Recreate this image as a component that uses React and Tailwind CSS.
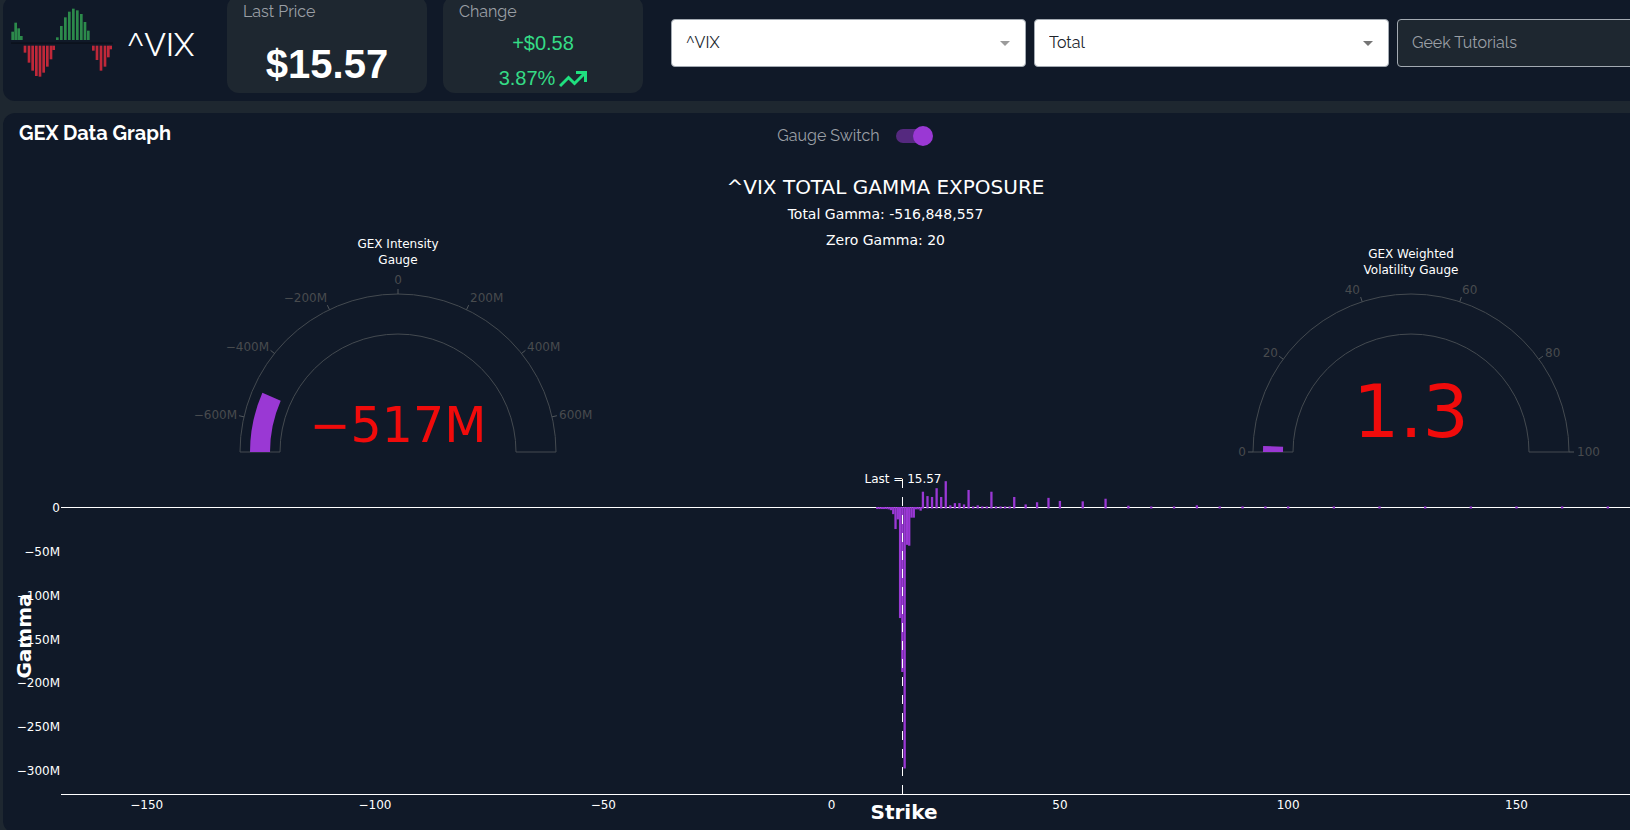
import React from "react";

const GREEN_BARS = [
  [38, 95], [47, 68], [56, 85], [64, 108],
  [172, 112], [184, 78], [196, 52], [208, 35], [220, 26], [232, 31], [244, 42], [255, 66], [265, 92],
];
const RED_BARS = [
  [75, 158], [87, 188], [98, 212], [109, 228], [120, 230], [131, 218], [142, 200], [153, 178], [161, 150],
  [280, 152], [291, 180], [303, 212], [315, 200], [325, 172], [332, 148],
];

function Logo() {
  return (
    <svg viewBox="0 0 330 270" className="h-[90px] w-[110px] shrink-0" aria-hidden="true">
      <rect x="24" y="127" width="306" height="5" fill="#0b111c" />
      {GREEN_BARS.map(([x, top]) => (
        <rect key={x} x={x - 13} y={top} width="8" height={120 - top} fill="#2c8a4b" />
      ))}
      {RED_BARS.map(([x, bottom]) => (
        <rect key={x} x={x - 13} y="137" width="8" height={bottom - 137} fill="#c02839" />
      ))}
    </svg>
  );
}

function StatCard({ title, children }) {
  return (
    <section className="flex h-[97px] w-[200px] shrink-0 flex-col rounded-xl bg-[#1e2730] px-4 pt-1">
      <h2 className="text-[16px] leading-6 text-[#9a9fa5]">{title}</h2>
      {children}
    </section>
  );
}

function SelectBox({ label, value, dark, wide }) {
  return (
    <div className={wide ? "relative flex-1" : "relative w-[355px] shrink-0"}>
      <select
        aria-label={label}
        defaultValue={value}
        className={
          dark
            ? "h-12 w-full appearance-none rounded border border-[#a3aab2] bg-[#1e2730] px-[14px] text-[16px] text-[#9a9fa5]"
            : "h-12 w-full appearance-none rounded border border-[#a3aab2] bg-white px-[14px] text-[16px] text-[#20242b]"
        }
      >
        <option>{value}</option>
      </select>
      <svg viewBox="0 0 10 5" className="pointer-events-none absolute top-[22px] right-4 h-[5px] w-[10px]" aria-hidden="true">
        <path d="M0 0h10L5 5z" fill={label === "Symbol" ? "#9b9b9b" : "#757575"} />
      </svg>
    </div>
  );
}

const CX = 208;
const CY = 293;

function polar(r, deg) {
  const a = (deg * Math.PI) / 180;
  return [CX - r * Math.cos(a), CY - r * Math.sin(a)];
}

function ring(r1, r2, deg) {
  const [ax, ay] = polar(r2, 0);
  const [bx, by] = polar(r2, deg);
  const [cx, cy] = polar(r1, deg);
  const [dx, dy] = polar(r1, 0);
  return `M${ax} ${ay}A${r2} ${r2} 0 0 1 ${bx} ${by}L${cx} ${cy}A${r1} ${r1} 0 0 0 ${dx} ${dy}Z`;
}

function Gauge({ title, titleY, ticks, angle, value, size, valueY }) {
  return (
    <svg viewBox="0 0 416 306" className="w-full font-['DejaVu_Sans',sans-serif]" role="img" aria-label={title.join(" ")}>
      {title.map((line, i) => (
        <text key={line} x={CX} y={titleY + i * 16} fill="#fff" fontSize="12" textAnchor="middle">{line}</text>
      ))}
      <path d={ring(118, 158, 180)} fill="none" stroke="#444a50" />
      <path d={ring(128, 148, angle)} fill="#9a38d4" />
      {ticks.map(([text, deg, x, y, anchor]) => {
        const [x1, y1] = polar(158, deg);
        const [x2, y2] = polar(163, deg);
        return (
          <g key={text}>
            <line x1={x1} y1={y1} x2={x2} y2={y2} stroke="#50565b" />
            <text x={x} y={y} fill="#484b4e" fontSize="12" textAnchor={anchor}>{text}</text>
          </g>
        );
      })}
      <text x={CX} y={valueY} fill="#f00b0b" fontSize={size} textAnchor="middle">{value}</text>
    </svg>
  );
}

const INTENSITY_TICKS = [
  ["−600M", 12.86, 47, 260, "end"],
  ["−400M", 38.57, 79, 192, "end"],
  ["−200M", 64.29, 137, 143, "end"],
  ["0", 90, 208, 125, "middle"],
  ["200M", 115.71, 280, 143, "start"],
  ["400M", 141.43, 337, 192, "start"],
  ["600M", 167.14, 369, 260, "start"],
];
const VOLATILITY_TICKS = [
  ["0", 0, 43, 297, "end"],
  ["20", 36, 75, 198, "end"],
  ["40", 72, 157, 135, "end"],
  ["60", 108, 259, 135, "start"],
  ["80", 144, 342, 198, "start"],
  ["100", 180, 374, 297, "start"],
];

/* [strike, gamma in millions] */
const GAMMA = [
  [10, -1.2], [10.5, -1.2], [11, -1.2], [11.5, -1.2], [12, -1.2], [12.5, -1.5], [13, -2.5], [13.5, -7],
  [14, -24], [14.5, -13], [15, -125.5], [15.5, -187], [16, -297], [16.5, -42], [17, -43], [17.5, -11],
  [18, -11], [18.5, -1.5], [19, -1.5], [19.5, -3], [20, 18], [21, 13], [22, 12], [23, 22], [24, 12], [25, 30],
  [26, 2.5], [27, 5], [28, 5], [29, 3.5], [30, 20], [31, 1.2], [32, 2.5], [33, 1.2], [34, 1.2], [35, 18],
  [36, 1.2], [37, 1.2], [38, 1.2], [39, 1.2], [40, 12], [42.5, 3.5], [45, 6], [47.5, 11], [50, 7.5],
  [55, 7], [60, 10], [65, 2], [70, 1.2], [75, 1.2], [80, 2.5], [85, 1.2], [90, 1.2], [95, 1.2], [100, 1.2],
  [110, 1.2], [120, 1.2], [130, 1.2], [140, 1.2], [150, 1.2], [160, 1.2], [170, 1.2], [180, 1.2],
];
const sx = (strike) => 828.6 + strike * 4.566;
const sy = (m) => 42.5 - m * 0.877;

function GammaChart() {
  return (
    <svg viewBox="0 0 1704 368" className="block w-full font-['DejaVu_Sans',sans-serif]" role="img" aria-label="Gamma by strike">
      <line x1="58" x2="1704" y1="42.5" y2="42.5" stroke="#fff" />
      {GAMMA.map(([strike, m]) => {
        const top = m > 0 ? sy(m) : 42;
        const height = Math.abs(m) * 0.877 + 1;
        return <rect key={strike} x={sx(strike) - 1.15} y={top} width="2.3" height={height} fill="#9a38d4" />;
      })}
      <line x1="899.5" x2="899.5" y1="14" y2="330" stroke="#fff" strokeDasharray="9 9" />
      <text x="900" y="18" fill="#fff" fontSize="12" textAnchor="middle">Last = 15.57</text>
      {[0, 50, 100, 150, 200, 250, 300].map((m) => (
        <text key={m} x="57" y={sy(-m) + 4.5} fill="#fff" fontSize="12" textAnchor="end">
          {m === 0 ? "0" : `−${m}M`}
        </text>
      ))}
      <line x1="58" x2="1704" y1="329.5" y2="329.5" stroke="#fff" />
      {[-150, -100, -50, 0, 50, 100, 150].map((s) => (
        <text key={s} x={sx(s)} y="344" fill="#fff" fontSize="12" textAnchor="middle">
          {String(s).replace("-", "−")}
        </text>
      ))}
      <text x="901" y="354" fill="#fff" fontSize="20" fontWeight="700" textAnchor="middle">Strike</text>
      <text transform="translate(28 171) rotate(-90)" fill="#fff" fontSize="20" fontWeight="700" textAnchor="middle">Gamma</text>
    </svg>
  );
}

export default function App() {
  return (
    <div className="h-screen overflow-hidden bg-[#1e2730] font-['Raleway',Lato,sans-serif] text-white">
      <div className="flex min-w-[1710px] flex-col gap-3 px-[3px]">
        <header className="-mt-1 flex h-[105px] items-start rounded-xl bg-[#101928]">
          <div className="flex w-[224px] shrink-0 items-center pt-1">
            <Logo />
            <h1 className="pl-[14px] text-[32px] leading-[84px]">^VIX</h1>
          </div>
          <div className="flex gap-4">
            <StatCard title="Last Price">
              <p className="pt-[15px] text-center font-['Liberation_Sans',sans-serif] text-[40px] leading-[50px] font-bold">$15.57</p>
            </StatCard>
            <StatCard title="Change">
              <div className="flex flex-col items-center pt-[2px] font-['Liberation_Sans',sans-serif] text-[20px] leading-[35px] text-[#35dc86]">
                <p>+$0.58</p>
                <p className="flex items-center gap-1">
                  3.87%
                  <svg viewBox="0 0 28 18" className="h-[18px] w-[28px]" fill="none" stroke="#1fe07f" strokeWidth="3" aria-hidden="true">
                    <path d="M1 16L9.500 7.500L15.500 13.500L25.500 3.500M17 2.500H26.500V12" />
                  </svg>
                </p>
              </div>
            </StatCard>
          </div>
          <div className="flex flex-1 gap-2 pt-[23px] pr-4 pl-7">
            <SelectBox label="Symbol" value="^VIX" />
            <SelectBox label="Expiration" value="Total" />
            <SelectBox label="Tutorials" value="Geek Tutorials" dark wide />
          </div>
        </header>

        <main className="rounded-xl bg-[#101928]">
          <div className="grid h-[46px] grid-cols-[1fr_auto_1fr] items-center">
            <h2 className="pb-[6px] pl-4 text-[20px] leading-6 font-bold">GEX Data Graph</h2>
            <label className="flex items-center gap-4 text-[16px] leading-6 text-[#9a9fa5]">
              Gauge Switch
              <input
                type="checkbox"
                role="switch"
                defaultChecked
                className="relative mr-[3px] h-[14px] w-[34px] appearance-none rounded-full bg-[#55297f] before:absolute before:-top-[3px] before:-right-[3px] before:h-5 before:w-5 before:rounded-full before:bg-[#9a38d4]"
              />
            </label>
          </div>
          <div className="grid grid-cols-[416px_1fr_416px] items-start pr-[88px] pl-[187px]">
            <Gauge title={["GEX Intensity", "Gauge"]} titleY={89} ticks={INTENSITY_TICKS} angle={23.6} value="−517M" size={49} valueY={283} />
            <div className="pt-[14px] pr-[38px] text-center font-['DejaVu_Sans',sans-serif] text-[14px] leading-[26px]">
              <h3 className="text-[20px] leading-7">^VIX TOTAL GAMMA EXPOSURE</h3>
              <p>Total Gamma: -516,848,557</p>
              <p>Zero Gamma: 20</p>
            </div>
            <Gauge title={["GEX Weighted", "Volatility Gauge"]} titleY={99} ticks={VOLATILITY_TICKS} angle={2.34} value="1.3" size={73} valueY={278} />
          </div>
          <GammaChart />
        </main>
      </div>
    </div>
  );
}
